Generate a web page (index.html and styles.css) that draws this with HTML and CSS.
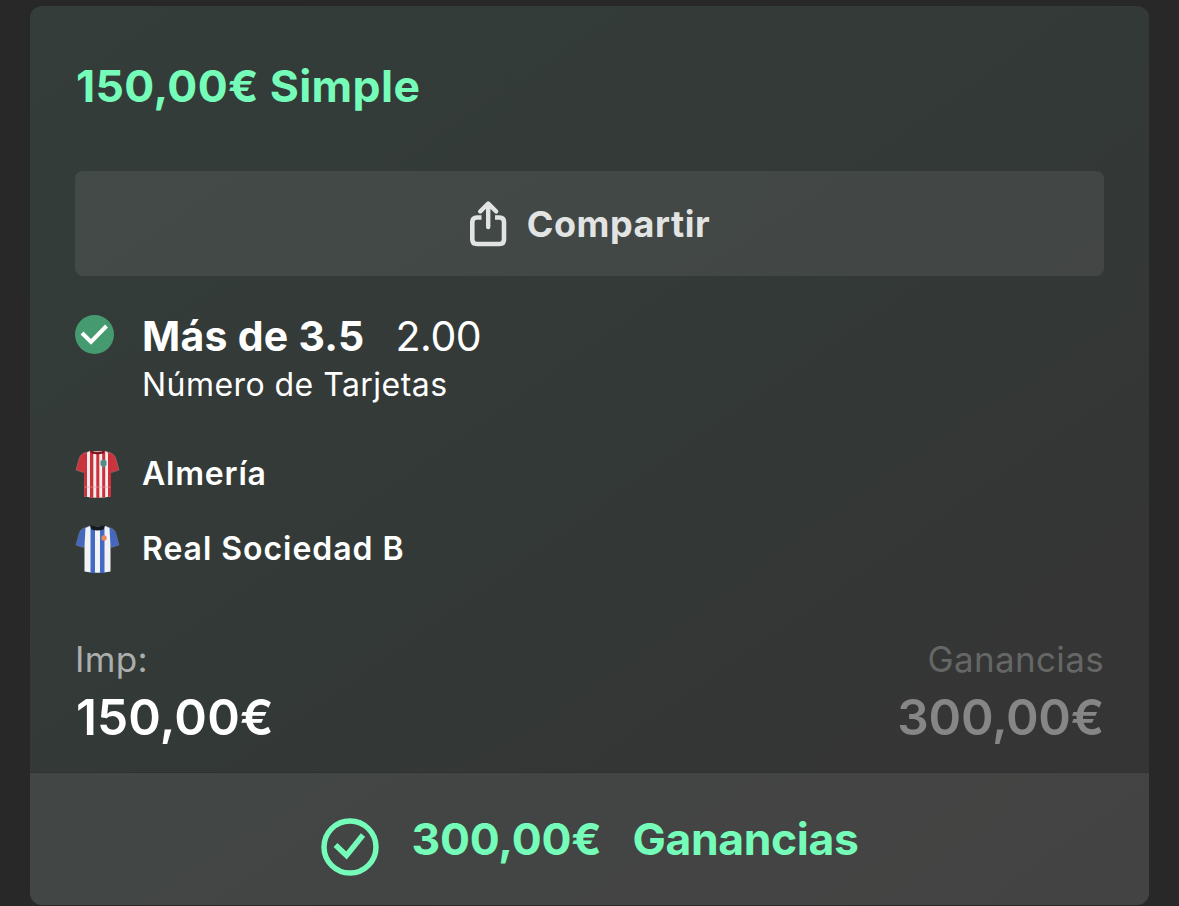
FILE: index.html
```html
<!DOCTYPE html>
<html lang="es">
<head>
<meta charset="utf-8">
<title>Apuesta simple</title>
<link rel="stylesheet" href="styles.css">
</head>
<body>
<main class="card">
  <section class="content">
    <h1 class="title"><span>150,00€ Simple</span></h1>
    <button class="share">
      <svg class="share-icon" width="38" height="48" viewBox="0 0 38 48" fill="none" stroke="#e1e4e2" stroke-linecap="round" stroke-linejoin="round">
        <path stroke-width="4.600" stroke-linecap="butt" d="M12.500 17.500H8Q3.300 17.500 3.300 22V39.500Q3.300 44 8 44H30.500Q35 44 35 39.500V22Q35 17.500 30.500 17.500H26"/>
        <path stroke-width="4.400" d="M19.200 27V4.500M11.200 11.500L19.200 3.500L27.200 11.500"/>
      </svg>
      <span class="share-label">Compartir</span>
    </button>
    <div class="bet">
      <svg class="won" width="39" height="39" viewBox="0 0 39 39">
        <circle cx="19.500" cy="19.500" r="19.500" fill="#469a70"/>
        <path d="M7 18L16 27L31.500 11" fill="none" stroke="#fff" stroke-width="4"/>
      </svg>
      <div class="bet-text">
        <div class="selection"><strong>Más de 3.5</strong><span class="odds">2.00</span></div>
        <div class="market"><span>Número de Tarjetas</span></div>
      </div>
    </div>
    <div class="team">
      <svg width="46" height="50" viewBox="0 0 46 50">
        <path d="M15 2L8 4.500Q5 6 4 10L1 21L8.500 23.500L10 20L13 8ZM30 2L37 4.500Q40 6 41 10L44 21L36.500 23.500L35 20L32 8Z" fill="#c9343d" stroke="#987274" stroke-width=".6"/>
        <path d="M15 2L9.500 5V47.500Q22.500 50 35.500 47.500V5L30 2Z" fill="#f3eeee"/>
        <path d="M9 5L12 3.500V48L9.200 47.500ZM15 2H18.300V48.700H15ZM21.300 3H24.300V49H21.300ZM27.200 2H30.200V48.500H27.200ZM33 3.500L36 5V47.500L33 48Z" fill="#cb303b"/>
        <path d="M9.500 38H35.500" stroke="#e5969a" stroke-width=".7"/>
        <path d="M15 1.500Q22.500 4 30 1.500L28.500 4.500Q22.500 6 16.500 4.500Z" fill="#7e1520"/>
        <path d="M25.500 12Q28.500 9 31.500 12V16L28.500 19L25.500 16Z" fill="#558c86"/>
      </svg>
      <span class="name almeria">Almería</span>
    </div>
    <div class="team">
      <svg width="46" height="50" viewBox="0 0 46 50">
        <path d="M15 2L8 4.500Q5 6 4 10L1 21L8.500 23.500L10 20L13 8ZM30 2L37 4.500Q40 6 41 10L44 21L36.500 23.500L35 20L32 8Z" fill="#4567bd" stroke="#667b9b" stroke-width=".6"/>
        <path d="M15 2L10.500 4L9.500 22V47.500Q22.500 50 35.500 47.500V22L34.500 4L30 2Z" fill="#f2f3f7"/>
        <path d="M15.500 2H20V49H15.500ZM25 2H29.500V49H25Z" fill="#4269c4"/>
        <path d="M15 1.500Q22.500 3 30 1.500L28.500 5.500Q22.500 7.500 16.500 5.500Z" fill="#14191d"/>
        <circle cx="29" cy="14" r="2.700" fill="#e88757"/>
      </svg>
      <span class="name real">Real Sociedad B</span>
    </div>
    <div class="totals">
      <div class="stake">
        <div class="label"><span>Imp:</span></div>
        <div class="amount"><span>150,00€</span></div>
      </div>
      <div class="returns">
        <div class="label"><span>Ganancias</span></div>
        <div class="amount"><span>300,00€</span></div>
      </div>
    </div>
  </section>
  <footer class="result">
    <svg class="result-icon" width="58" height="58" viewBox="0 0 58 58" fill="none" stroke="#75fcb9">
      <circle cx="29" cy="29" r="26" stroke-width="5.500"/>
      <path d="M14.500 27L25.500 37.500L42 17" stroke-width="5.500"/>
    </svg>
    <span class="result-amount">300,00€</span>
    <span class="result-label">Ganancias</span>
  </footer>
</main>
</body>
</html>
```
FILE: styles.css
```css
* { box-sizing: border-box; }

body {
  margin: 0;
  height: 906px;
  overflow: hidden;
  padding: 6px 30px 0;
  background: #282828;
  font-family: Inter, "Liberation Sans", sans-serif;
  color: #fff;
}

.card {
  height: 899px;
  border-radius: 12px;
  overflow: hidden;
  background: linear-gradient(145deg, #343d3a 0%, #333937 50%, #343635 72%, #363434 100%);
}

.content {
  height: 767px;
  padding: 50px 45px 0;
  border-bottom: 1px solid #303231;
}

.title {
  margin: 0;
  height: 60px;
  padding-left: 1px;
  line-height: 60px;
  font-size: 44.500px;
  font-weight: 700;
  letter-spacing: .35px;
  color: #75fcb9;
  white-space: nowrap;
}

.share {
  display: flex;
  justify-content: center;
  align-items: center;
  gap: 20px;
  width: 100%;
  height: 105px;
  margin-top: 55px;
  padding: 0;
  border: 0;
  border-radius: 8px;
  background: rgba(255, 255, 255, .075);
  color: #e1e4e2;
  font: 700 36px/60px Inter, sans-serif;
  letter-spacing: .55px;
}

.bet {
  display: flex;
  gap: 28px;
  margin-top: 35px;
}

.won { margin-top: 4px; }

.selection {
  display: flex;
  gap: 33px;
  height: 51px;
  line-height: 51px;
  font-size: 41px;
}

.selection strong { letter-spacing: .25px; }
.odds { margin-left: -2px; letter-spacing: -.4px; }

.market {
  height: 45px;
  line-height: 45px;
  font-size: 32px;
  letter-spacing: .45px;
}

.team {
  display: flex;
  align-items: center;
  gap: 21px;
  height: 75px;
  font-size: 32px;
  font-weight: 600;
}

.name { letter-spacing: .95px; }
.almeria { letter-spacing: .8px; }

.bet + .team { margin-top: 29px; }

.totals {
  display: flex;
  justify-content: space-between;
  margin-top: 48px;
}

.label {
  height: 50px;
  line-height: 50px;
  font-size: 35px;
  letter-spacing: .35px;
  color: #abaead;
}

.amount {
  height: 66px;
  line-height: 66px;
  font-size: 49.500px;
  font-weight: 600;
}

.stake .amount { padding-left: 1px; letter-spacing: .15px; }
.returns { text-align: right; color: #858685; }
.returns .label { color: #656766; }
.returns .amount { letter-spacing: -.3px; }

.result {
  display: flex;
  justify-content: center;
  height: 132px;
  padding-top: 36px;
  background: rgba(255, 255, 255, .075);
  color: #75fcb9;
  font-size: 44.500px;
  font-weight: 700;
  line-height: 60px;
}

.result-icon { margin: 9px 33px 0 0; }
.result-amount { margin-right: 31px; letter-spacing: -.2px; }
.result-label { letter-spacing: -.4px; }
```
